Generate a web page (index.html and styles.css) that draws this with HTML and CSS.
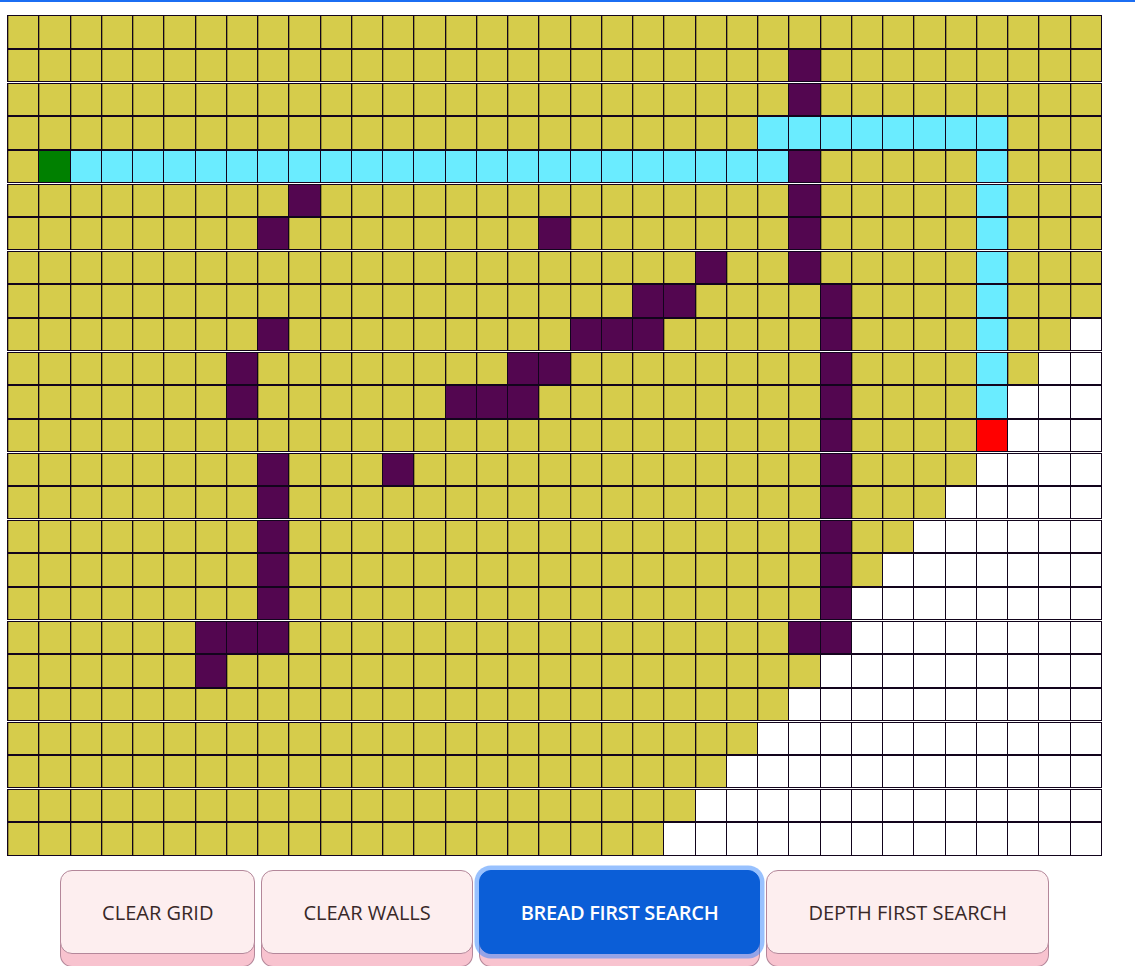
FILE: index.html
```html
<!DOCTYPE html>
<html lang="en">
<head>
<meta charset="utf-8">
<title>Pathfinding Visualizer</title>
<link rel="stylesheet" href="styles.css">
</head>
<body>
<div class="topbar"></div>
<main class="app">
  <div class="board" id="board"></div>
  <div class="controls">
    <button class="btn">CLEAR GRID</button>
    <button class="btn">CLEAR WALLS</button>
    <button class="btn active">BREAD FIRST SEARCH</button>
    <button class="btn">DEPTH FIRST SEARCH</button>
  </div>
</main>
<script src="script.js"></script>
</body>
</html>
```

FILE: styles.css
```css
html, body {
  margin: 0;
  padding: 0;
  background: #ffffff;
}
html {
  height: 100%;
}
body {
  height: 966px;
  overflow: hidden;
}
.topbar {
  height: 2px;
  background: #1b6ef3;
}
.app {
  width: 1095px;
  margin: 13.4px 0 0 7px;
}
.board {
  display: flex;
  flex-direction: column;
}
.row {
  display: flex;
  align-items: flex-start;
  height: 33.625px;
}
.cell {
  flex: 1 1 0;
  min-width: 0;
  height: 33.3px;
  box-sizing: border-box;
  border: 1px solid #12041c;
  border-right: 0;
  background: #ffffff;
}
.cell:last-child {
  border-right: 1px solid #12041c;
}
.cell.visited {
  background: #d6cc4b;
  box-shadow: inset 1px 0 0 rgba(40, 30, 0, 0.35);
}
.cell.wall {
  background: #530650;
}
.cell.path {
  background: #6aecff;
}
.cell.start {
  background: #008000;
}
.cell.end {
  background: #ff0000;
}
.controls {
  display: flex;
  justify-content: center;
  gap: 6px;
  margin-top: 14px;
}
.btn {
  height: 84px;
  padding: 0 41px;
  border: 1px solid #b4879a;
  border-radius: 12px;
  background: #fdeeef;
  color: #382828;
  font-family: "Open Sans", "Noto Sans", sans-serif;
  font-size: 20px;
  font-weight: 400;
  cursor: pointer;
  box-shadow: 0 13px 0 -1px #f8c3cf, 0 13px 0 0 #b4879a;
}
.btn.active {
  background: #0b5ed7;
  border-color: #0b5ed7;
  color: #ffffff;
  font-weight: 600;
  letter-spacing: -0.3px;
  box-shadow: 0 0 0 4.5px rgba(49, 132, 253, 0.5), 0 13px 0 -1px #f8c3cf, 0 13px 0 0 #b4879a;
}
```

FILE: script.js
```js
(function () {
  function rep(ch, n) { return new Array(n + 1).join(ch); }
  var o = function (n) { return rep('o', n); };
  var w = function (n) { return rep('w', n); };
  var c = function (n) { return rep('c', n); };
  var u = function (n) { return rep('.', n); };
  var rows = [
    o(35),
    o(25) + w(1) + o(9),
    o(25) + w(1) + o(9),
    o(24) + c(8) + o(3),
    o(1) + 's' + c(23) + w(1) + o(5) + c(1) + o(3),
    o(9) + w(1) + o(15) + w(1) + o(5) + c(1) + o(3),
    o(8) + w(1) + o(8) + w(1) + o(7) + w(1) + o(5) + c(1) + o(3),
    o(22) + w(1) + o(2) + w(1) + o(5) + c(1) + o(3),
    o(20) + w(2) + o(4) + w(1) + o(4) + c(1) + o(3),
    o(8) + w(1) + o(9) + w(3) + o(5) + w(1) + o(4) + c(1) + o(2) + u(1),
    o(7) + w(1) + o(8) + w(2) + o(8) + w(1) + o(4) + c(1) + o(1) + u(2),
    o(7) + w(1) + o(6) + w(3) + o(9) + w(1) + o(4) + c(1) + u(3),
    o(26) + w(1) + o(4) + 'e' + u(3),
    o(8) + w(1) + o(3) + w(1) + o(13) + w(1) + o(4) + u(4),
    o(8) + w(1) + o(17) + w(1) + o(3) + u(5),
    o(8) + w(1) + o(17) + w(1) + o(2) + u(6),
    o(8) + w(1) + o(17) + w(1) + o(1) + u(7),
    o(8) + w(1) + o(17) + w(1) + u(8),
    o(6) + w(3) + o(16) + w(2) + u(8),
    o(6) + w(1) + o(19) + u(9),
    o(25) + u(10),
    o(24) + u(11),
    o(23) + u(12),
    o(22) + u(13),
    o(21) + u(14)
  ];
  var cls = { o: 'visited', w: 'wall', c: 'path', s: 'start', e: 'end', '.': '' };
  var board = document.getElementById('board');
  rows.forEach(function (r) {
    var row = document.createElement('div');
    row.className = 'row';
    for (var i = 0; i < r.length; i++) {
      var cell = document.createElement('div');
      cell.className = ('cell ' + cls[r[i]]).trim();
      row.appendChild(cell);
    }
    board.appendChild(row);
  });
})();
```
